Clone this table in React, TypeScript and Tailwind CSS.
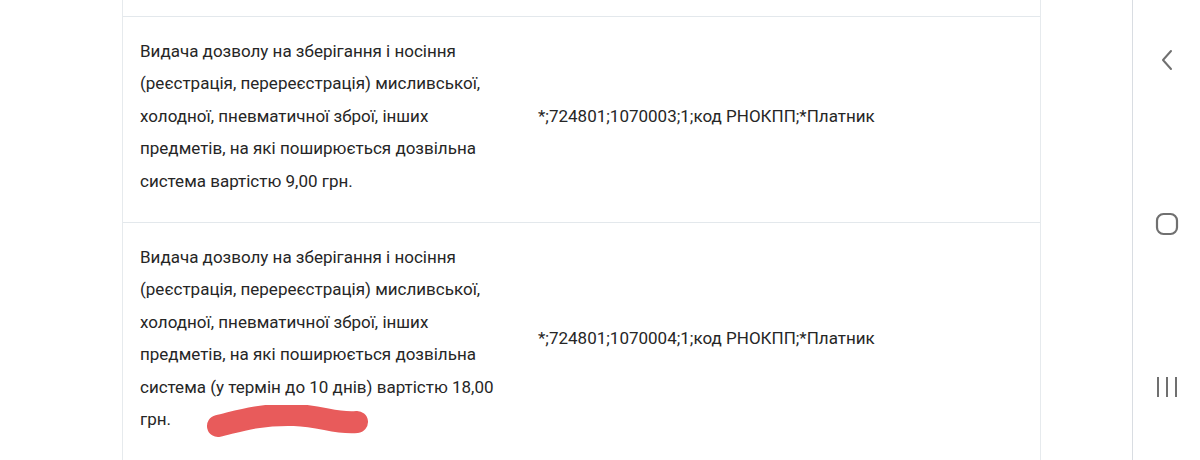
const rows = [
  {
    name: "Видача дозволу на зберігання і носіння (реєстрація, перереєстрація) мисливської, холодної, пневматичної зброї, інших предметів, на які поширюється дозвільна система вартістю 9,00 грн.",
    code: "*;724801;1070003;1;код РНОКПП;*Платник",
    hidden: false,
  },
  {
    name: "Видача дозволу на зберігання і носіння (реєстрація, перереєстрація) мисливської, холодної, пневматичної зброї, інших предметів, на які поширюється дозвільна система (у термін до 10 днів) вартістю 18,00 грн.",
    code: "*;724801;1070004;1;код РНОКПП;*Платник",
    hidden: true,
  },
];

function Scribble() {
  return (
    <svg
      className="absolute left-[83px] top-[182px]"
      width="170"
      height="40"
      viewBox="0 0 170 40"
    >
      <path
        d="M12 21 C 30 17, 50 9, 88 10 C 118 11, 128 19, 151 17"
        fill="none"
        stroke="#e85b5b"
        strokeWidth="22"
        strokeLinecap="round"
      />
    </svg>
  );
}

export default function App() {
  return (
    <div className="flex h-[460px] w-[1200px] overflow-hidden bg-white font-['Roboto',sans-serif] text-[17px] text-[#262626]">
      <main className="flex-1 pl-[122px]">
        <div className="w-[919px] border-x border-[#e6eaed] min-h-full">
          <div className="h-[17px] border-b border-[#e3e8ec]" />
          {rows.map((r) => (
            <div
              key={r.code}
              className="grid grid-cols-[399px_1fr] border-b border-[#e3e8ec]"
            >
              <div className="relative pl-[17px] pr-[17px] pt-[18px] pb-[25px] leading-[32.4px]">
                <p>{r.name}</p>
                {r.hidden && <Scribble />}
              </div>
              <div className="flex items-center pl-4 pt-[18px] pb-[25px] leading-[32.4px]">
                {r.code}
              </div>
            </div>
          ))}
        </div>
      </main>
      <nav className="flex w-[68px] flex-col items-center border-l border-[#d9dde2] text-[#707070]">
        <svg className="mt-[49px]" width="14" height="22" viewBox="0 0 14 22">
          <path
            d="M11 2 L3 11 L11 20"
            fill="none"
            stroke="currentColor"
            strokeWidth="2"
            strokeLinecap="round"
            strokeLinejoin="round"
          />
        </svg>
        <svg className="mt-[141px]" width="24" height="24" viewBox="0 0 24 24">
          <rect
            x="2"
            y="2"
            width="20"
            height="20"
            rx="6.5"
            fill="none"
            stroke="currentColor"
            strokeWidth="2.2"
          />
        </svg>
        <svg className="mt-[139px]" width="24" height="24" viewBox="0 0 24 24">
          <path
            d="M3 2 V22 M12 2 V22 M21 2 V22"
            fill="none"
            stroke="currentColor"
            strokeWidth="2"
          />
        </svg>
      </nav>
    </div>
  );
}
